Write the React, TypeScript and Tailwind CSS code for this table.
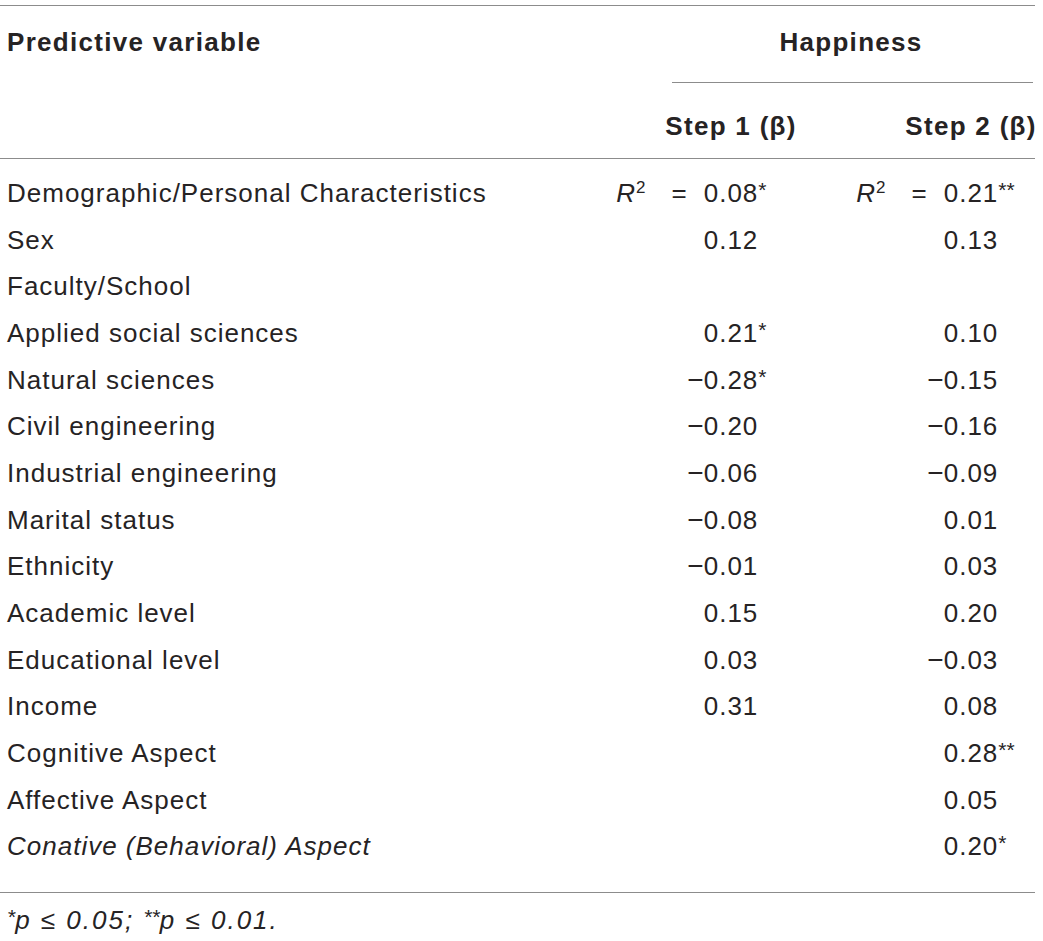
import React from "react";

type V = { pre?: React.ReactNode; num?: string; post?: string };

const Star = ({ s }: { s: string }) => (
  <span className="relative -top-[5px] text-[21px] tracking-[0px]">{s}</span>
);

const Val = ({ pre, num, post }: V) => {
  if (!num) return <div />;
  return (
    <div className="flex">
      <span className="flex min-w-0 flex-1 justify-end whitespace-nowrap">{pre}</span>
      <span className="whitespace-nowrap">{num}</span>
      <span className="min-w-0 flex-1 whitespace-nowrap">{post ? <Star s={post} /> : null}</span>
    </div>
  );
};

const R2 = (
  <span className="whitespace-nowrap">
    <i>R</i>
    <span className="relative -top-[9px] text-[17px]">2</span>
    <span className="ml-[25px] mr-[16px]">=</span>
  </span>
);

const M = <span className="text-[28px] tracking-[0px]">−</span>;

type Row = { label: string; italic?: boolean; a: V; b: V };

const rows: Row[] = [
  { label: "Demographic/Personal Characteristics", a: { pre: R2, num: "0.08", post: "*" }, b: { pre: R2, num: "0.21", post: "**" } },
  { label: "Sex", a: { num: "0.12" }, b: { num: "0.13" } },
  { label: "Faculty/School", a: {}, b: {} },
  { label: "Applied social sciences", a: { num: "0.21", post: "*" }, b: { num: "0.10" } },
  { label: "Natural sciences", a: { pre: M, num: "0.28", post: "*" }, b: { pre: M, num: "0.15" } },
  { label: "Civil engineering", a: { pre: M, num: "0.20" }, b: { pre: M, num: "0.16" } },
  { label: "Industrial engineering", a: { pre: M, num: "0.06" }, b: { pre: M, num: "0.09" } },
  { label: "Marital status", a: { pre: M, num: "0.08" }, b: { num: "0.01" } },
  { label: "Ethnicity", a: { pre: M, num: "0.01" }, b: { num: "0.03" } },
  { label: "Academic level", a: { num: "0.15" }, b: { num: "0.20" } },
  { label: "Educational level", a: { num: "0.03" }, b: { pre: M, num: "0.03" } },
  { label: "Income", a: { num: "0.31" }, b: { num: "0.08" } },
  { label: "Cognitive Aspect", a: {}, b: { num: "0.28", post: "**" } },
  { label: "Affective Aspect", a: {}, b: { num: "0.05" } },
  { label: "Conative (Behavioral) Aspect", italic: true, a: {}, b: { num: "0.20", post: "*" } },
];

export default function App() {
  return (
    <div className="min-h-[941px] w-[1043px] bg-white">
      <div className="w-[1035px] pt-[5px] font-['Liberation_Sans',Arial,sans-serif] text-[26px] tracking-[1px] text-[#262324]">
        <div className="h-px bg-[#8c8c8c]" />
        {/* header */}
        <div className="grid grid-cols-[667px_128px_112px_128px] font-bold tracking-[1.3px]">
          <div className="col-start-1 row-start-1 h-[76px] pl-[7px] pt-[21px] leading-[30px]">Predictive variable</div>
          <div className="col-span-3 col-start-2 row-start-1 h-[76px] pt-[21px] text-center leading-[30px]">Happiness</div>
          <div className="col-span-3 col-start-2 row-start-2 ml-[5px] mr-[2px] h-px bg-[#8c8c8c]" />
          <div className="col-start-2 row-start-3 flex h-[75px] justify-center whitespace-nowrap pt-[28px] leading-[30px]">Step 1 (β)</div>
          <div className="col-start-4 row-start-3 flex h-[75px] justify-center whitespace-nowrap pt-[28px] leading-[30px]">Step 2 (β)</div>
        </div>
        <div className="h-px bg-[#8c8c8c]" />
        {/* body */}
        <div className="pb-[22px] pt-[11px]">
          {rows.map((r, i) => (
            <div key={i} className="grid h-[46.67px] grid-cols-[667px_128px_112px_128px] leading-[46.67px]">
              <div className={"whitespace-nowrap pl-[7px] " + (r.italic ? "italic" : "")}>{r.label}</div>
              <Val {...r.a} />
              <div />
              <Val {...r.b} />
            </div>
          ))}
        </div>
        <div className="h-px bg-[#8c8c8c]" />
        <div className="pl-[7px] pt-[12px] italic leading-[30px] tracking-[2px]">
          <Star s="*" />p ≤ 0.05; <Star s="**" />p ≤ 0.01.
        </div>
      </div>
    </div>
  );
}
